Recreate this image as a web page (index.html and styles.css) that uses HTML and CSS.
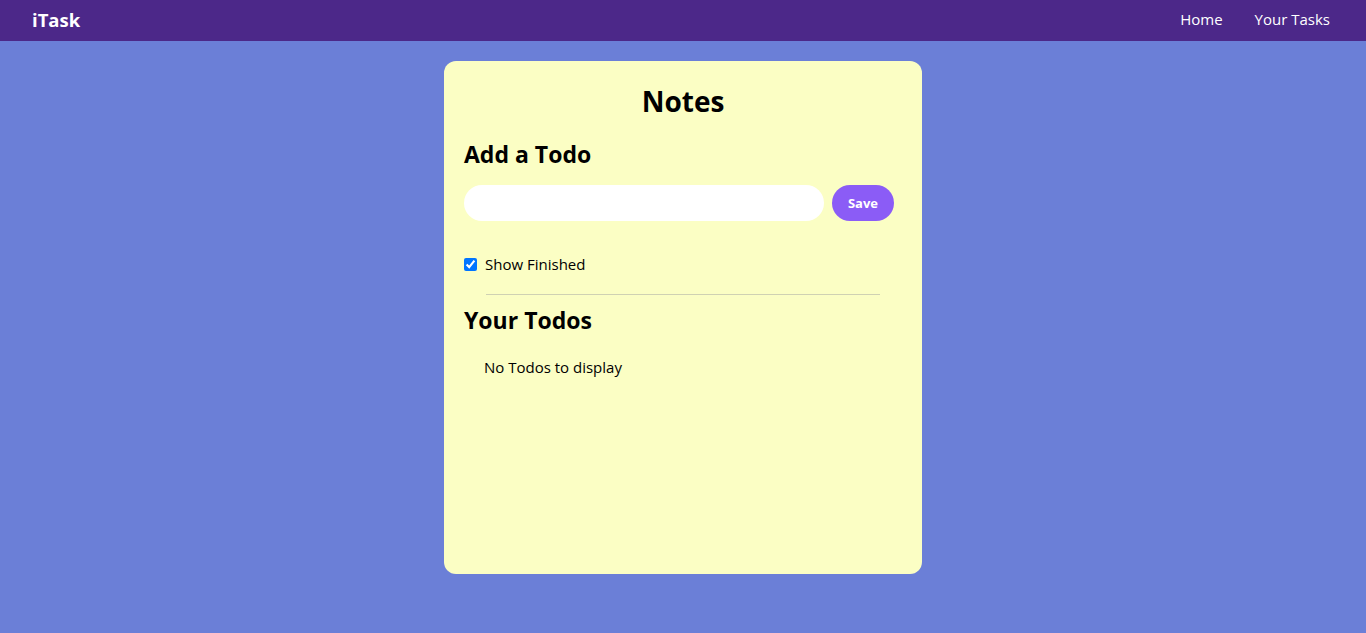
FILE: index.html
```html
<!DOCTYPE html>
<html>
<head>
<meta charset="utf-8">
<link rel="stylesheet" href="styles.css">
</head>
<body>
<nav class="navbar">
  <div class="logo">iTask</div>
  <ul class="nav-links">
    <li>Home</li>
    <li>Your Tasks</li>
  </ul>
</nav>
<main class="card">
  <h1 class="title">Notes</h1>
  <h2 class="heading add-heading">Add a Todo</h2>
  <div class="add-row">
    <input class="todo-input" type="text">
    <button class="save-btn">Save</button>
  </div>
  <label class="show-finished">
    <input type="checkbox" checked class="check">
    <span>Show Finished</span>
  </label>
  <div class="divider"></div>
  <h2 class="heading list-heading">Your Todos</h2>
  <div class="todos">
    <div class="empty">No Todos to display</div>
  </div>
</main>
</body>
</html>
```

FILE: styles.css
```css
* { box-sizing: border-box; }
html, body { margin: 0; padding: 0; }
body {
  background: #6b7fd7;
  font-family: "Open Sans", "Noto Sans", sans-serif;
  color: #000;
  height: 633px;
}
.navbar {
  background: #4c2889;
  height: 41px;
  display: flex;
  align-items: center;
  justify-content: space-between;
  color: #fff;
  padding: 0 36px 3px 32px;
}
.logo {
  font-weight: 700;
  font-size: 18.5px;
}
.nav-links {
  list-style: none;
  display: flex;
  gap: 32px;
  margin: 0;
  padding: 0;
  font-size: 15px;
}
.card {
  background: #fbfec4;
  width: 478px;
  height: 513px;
  margin: 20px auto 0;
  border-radius: 12px;
  padding: 20px;
}
.title {
  text-align: center;
  font-size: 28px;
  font-weight: 700;
  margin: 0;
  line-height: 40px;
}
.heading {
  font-size: 23px;
  font-weight: 700;
  line-height: 32px;
}
.add-heading {
  margin: 17px 0 0;
}
.list-heading {
  margin: 9px 0 0;
}
.add-row {
  display: flex;
  gap: 8px;
  margin-top: 15px;
  align-items: center;
}
.todo-input {
  width: 360px;
  height: 36px;
  border: none;
  border-radius: 18px;
  background: #fff;
  padding: 0 16px;
  outline: none;
}
.save-btn {
  width: 62px;
  height: 36px;
  border: none;
  border-radius: 18px;
  background: #8b5cf6;
  color: #fff;
  font-weight: 700;
  font-size: 13px;
  font-family: inherit;
  padding: 0;
}
.show-finished {
  display: flex;
  align-items: center;
  gap: 8px;
  margin-top: 31px;
  font-size: 15px;
  line-height: 24px;
}
.check {
  margin: 0;
  width: 13px;
  height: 13px;
}
.divider {
  width: 90%;
  height: 1px;
  background: #cfd1b3;
  margin: 18px auto 0;
}
.todos {
  margin: 19px 20px 0;
}
.empty {
  font-size: 15px;
  line-height: 24px;
}
```
